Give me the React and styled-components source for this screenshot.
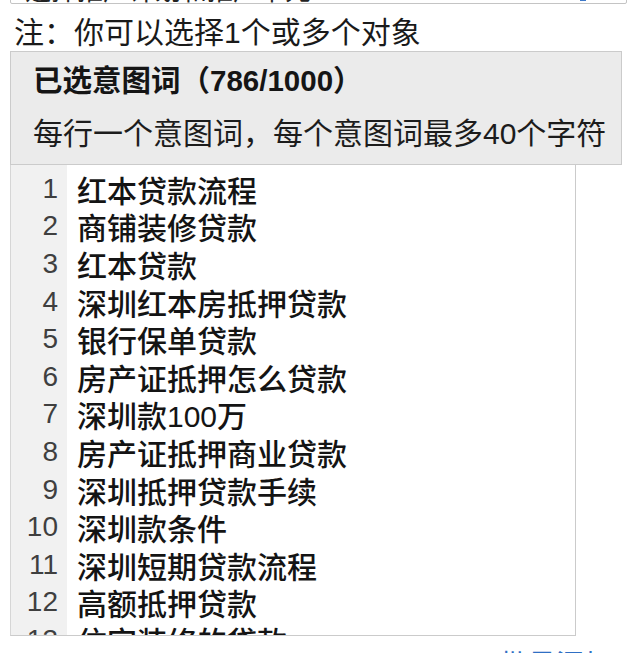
import React from 'react';
import styled, { createGlobalStyle } from 'styled-components';

const GlobalStyle = createGlobalStyle`
	html, body {
		margin: 0;
		padding: 0;
		background: #ffffff;
	}
	body {
		font-family: "Liberation Sans", "Noto Sans CJK SC", sans-serif;
		color: #161616;
		overflow: hidden;
	}
`;

const keywords = [
	'红本贷款流程',
	'商铺装修贷款',
	'红本贷款',
	'深圳红本房抵押贷款',
	'银行保单贷款',
	'房产证抵押怎么贷款',
	'深圳款100万',
	'房产证抵押商业贷款',
	'深圳抵押贷款手续',
	'深圳款条件',
	'深圳短期贷款流程',
	'高额抵押贷款',
	'住宅装修的贷款',
];

function App() {
	return (
		<Page>
			<GlobalStyle />
			<TopSelect>
				<span>选择推广计划和推广单元</span>
				<Caret />
			</TopSelect>
			<Note>注：你可以选择1个或多个对象</Note>
			<Panel>
				<Title>已选意图词（786/1000）</Title>
				<Hint>每行一个意图词，每个意图词最多40个字符</Hint>
			</Panel>
			<Editor>
				{keywords.map((word, i) => (
					<Line key={word}>
						<Gutter>{i + 1}</Gutter>
						<Text>{word}</Text>
					</Line>
				))}
				<GutterFill />
			</Editor>
			<Footer>
				<Link>+ 批量添加</Link>
			</Footer>
		</Page>
	);
}

export default App;

const Page = styled.div`
	width: 640px;
	height: 653px;
	padding-left: 10px;
	box-sizing: border-box;
	overflow: hidden;
`;

const TopSelect = styled.div`
	width: 617px;
	height: 24px;
	margin-top: -20px;
	box-sizing: border-box;
	border: 1px solid #c4c4c4;
	border-radius: 2px;
	display: flex;
	align-items: flex-end;
	justify-content: space-between;
	padding: 0 40px 0 14px;
	overflow: hidden;
	font-size: 26px;
	line-height: 28px;
	color: #222;

	span {
		transform: translateY(2px);
	}
`;

const Caret = styled.div`
	width: 6px;
	height: 3px;
	margin-bottom: 2px;
	background: #3d78c8;
`;

const Note = styled.div`
	margin-top: 11px;
	padding-left: 4px;
	font-size: 30px;
	line-height: 36px;
	color: #1a1a1a;
`;

const Panel = styled.div`
	width: 612px;
	box-sizing: border-box;
	padding: 11px 10px 12px 22px;
	background: #ebebeb;
	border: 1px solid #cbcbcb;
	display: flex;
	flex-direction: column;
	gap: 16px;
`;

const Title = styled.div`
	font-size: 29.5px;
	line-height: 36px;
	font-weight: bold;
	color: #151515;
`;

const Hint = styled.div`
	font-size: 30px;
	line-height: 37px;
	white-space: nowrap;
	color: #1c1c1c;
`;

const Editor = styled.div`
	position: relative;
	width: 566px;
	height: 471px;
	box-sizing: border-box;
	padding-top: 5px;
	border: 1px solid #cbcbcb;
	border-top: none;
	border-left-color: #d6d6d6;
	overflow: hidden;
	background: #ffffff;
`;

const Line = styled.div`
	display: flex;
	align-items: center;
	height: 37.6px;
`;

const Gutter = styled.div`
	flex: 0 0 56px;
	align-self: stretch;
	display: flex;
	align-items: center;
	justify-content: flex-end;
	padding-right: 9px;
	box-sizing: border-box;
	background: #f1f1f1;
	font-size: 28px;
	color: #3f3f3f;
	position: relative;
	z-index: 1;
`;

const GutterFill = styled.div`
	position: absolute;
	top: 0;
	left: 0;
	bottom: 0;
	width: 56px;
	background: #f1f1f1;
`;

const Text = styled.div`
	padding-left: 10px;
	font-size: 30px;
	font-weight: 500;
	white-space: nowrap;
	color: #141414;
`;

const Footer = styled.div`
	width: 602px;
	display: flex;
	justify-content: flex-end;
	margin-top: 13px;
`;

const Link = styled.span`
	font-size: 28px;
	line-height: 34px;
	color: #2f6fc4;
`;
